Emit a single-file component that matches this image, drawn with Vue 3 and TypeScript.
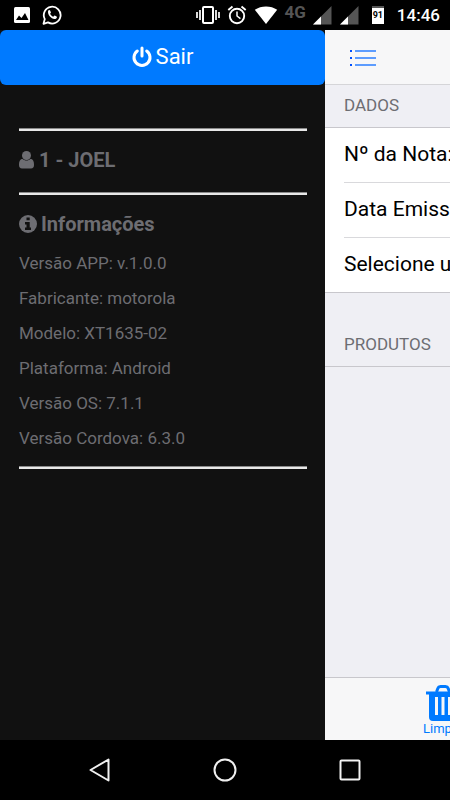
<script setup lang="ts">
interface InfoRow {
  label: string
  value: string
}

const info: InfoRow[] = [
  { label: 'Versão APP', value: 'v.1.0.0' },
  { label: 'Fabricante', value: 'motorola' },
  { label: 'Modelo', value: 'XT1635-02' },
  { label: 'Plataforma', value: 'Android' },
  { label: 'Versão OS', value: '7.1.1' },
  { label: 'Versão Cordova', value: '6.3.0' },
]

const fields: string[] = ['Nº da Nota:', 'Data Emissão:', 'Selecione um']
</script>

<template>
  <div class="screen">
    <header class="status">
      <div class="group left">
        <svg width="18" height="18" viewBox="0 0 18 18">
          <rect x="1" y="1" width="16" height="16" rx="1.500" fill="#fff" />
          <path d="M3 14l3-4.500 2.500 2.500 3.500-5 3.500 7z" fill="#000" />
        </svg>
        <svg width="20" height="20" viewBox="0 0 20 20">
          <path d="M1.500 18.800l1.300-4.700A8.400 8.400 0 1 1 6 17.400z" fill="none" stroke="#fff" stroke-width="1.800" stroke-linejoin="round" />
          <path d="M6.200 5.600c.8-1 1.600-.8 1.900-.1l.8 1.700c.2.600-.6 1.100-.8 1.600.7 1.400 1.700 2.300 3.100 2.900.5-.1 1-1.200 1.500-1.100l1.900.9c.7.400.1 1.900-.7 2.300-3.400 1.600-9-3.600-7.700-8.200z" fill="#fff" />
        </svg>
      </div>
      <div class="group right">
        <svg width="24" height="20" viewBox="0 0 24 20">
          <rect x="7" y="2" width="10" height="16" rx="1" fill="none" stroke="#fff" stroke-width="2" />
          <path d="M4 5v10M1 7v6M20 5v10M23 7v6" stroke="#fff" stroke-width="1.700" />
        </svg>
        <svg width="20" height="20" viewBox="0 0 20 20" fill="none" stroke="#fff">
          <circle cx="10" cy="11" r="7.200" stroke-width="1.900" />
          <path d="M10 6.500V11l3.400 2.600" stroke-width="1.500" />
          <path d="M1.300 5L5.500 1.500M18.700 5l-4.200-3.500" stroke-width="1.900" />
        </svg>
        <svg width="24" height="20" viewBox="0 0 24 20">
          <path d="M12 19L.8 4.800C7 .3 17 .3 23.200 4.800z" fill="#fff" />
        </svg>
        <span class="network">4G</span>
        <svg v-for="n in 2" :key="n" class="signal" width="19" height="19" viewBox="0 0 19 19">
          <path d="M0 18.500L18.500 0v18.500z" fill="#555" />
          <path d="M0 18.500L8 10.500v8z" fill="#fff" />
        </svg>
        <span class="battery">91</span>
        <time class="clock">14:46</time>
      </div>
    </header>

    <main class="main">
      <aside class="panel">
        <button class="exit" type="button">
          <svg width="20" height="22" viewBox="0 0 20 22" fill="none" stroke="#fff" stroke-width="3" stroke-linecap="round">
            <path d="M5.300 5a8 8 0 1 0 9.400 0" />
            <path d="M10 2v8" />
          </svg>
          <span>Sair</span>
        </button>
        <div class="panel-body">
          <hr class="rule" />
          <h2 class="heading user">
            <svg width="16" height="20" viewBox="0 0 16 20" fill="#6d6d72">
              <circle cx="7.500" cy="5.500" r="4.500" />
              <path d="M3.200 8.800c2.600 2.400 6 2.400 8.600 0 2.500.5 3.300 3.500 3.200 6.200 0 2-1 3.500-3 3.500H3c-2 0-3-1.500-3-3.500-.1-2.700.7-5.700 3.200-6.200z" />
            </svg>
            <span>1 - JOEL</span>
          </h2>
          <hr class="rule" />
          <h2 class="heading about">
            <svg width="18" height="20" viewBox="0 0 18 20">
              <circle cx="9" cy="10" r="9" fill="#6d6d72" />
              <path d="M7.500 3.500h3.200v2.800H7.500zM6 8h4.700v5.500H12V16H6v-2.500h1.500v-3H6z" fill="#111" />
            </svg>
            <span>Informações</span>
          </h2>
          <ul class="info">
            <li v-for="row in info" :key="row.label">{{ row.label }}: {{ row.value }}</li>
          </ul>
          <hr class="rule" />
        </div>
      </aside>

      <section class="page">
        <div class="navbar">
          <button class="menu" type="button" aria-label="Menu">
            <svg width="28" height="18" viewBox="0 0 28 18">
              <path d="M1 2h2M1 9h2M1 16h2" stroke="#0050ff" stroke-width="2" />
              <path d="M6 2h21M6 9h21M6 16h21" stroke="#2b7fff" stroke-width="1.700" />
            </svg>
          </button>
        </div>
        <h3 class="title">DADOS</h3>
        <ul class="fields">
          <li v-for="field in fields" :key="field">{{ field }}</li>
        </ul>
        <h3 class="title products">PRODUTOS</h3>
        <div class="toolbar">
          <button class="clear" type="button">
            <svg width="34" height="37" viewBox="0 0 34 37">
              <path d="M10.500 8L12 4q.5-1.500 2.500-1.500h5q2 0 2.500 1.500l1.500 4" fill="none" stroke="#007aff" stroke-width="3" />
              <path d="M0 7.500h34v3h-3V33q0 4-4 4H7q-4 0-4-4V10.500H0z" fill="#007aff" />
              <path d="M10.500 13v18M17 13v18M23.500 13v18" stroke="#f7f7f8" stroke-width="3" />
            </svg>
            <span>Limpar</span>
          </button>
        </div>
      </section>
    </main>

    <nav class="keys">
      <button type="button" aria-label="Voltar">
        <svg width="26" height="26" viewBox="0 0 26 26"><path d="M21.500 2.500v21L3.500 13z" /></svg>
      </button>
      <button type="button" aria-label="Início">
        <svg width="26" height="26" viewBox="0 0 26 26"><circle cx="13" cy="13" r="10.500" /></svg>
      </button>
      <button type="button" aria-label="Recentes">
        <svg width="26" height="26" viewBox="0 0 26 26"><rect x="3.500" y="3.500" width="19" height="19" rx="1" /></svg>
      </button>
    </nav>
  </div>
</template>

<style>
body {
  margin: 0;
  background: #000;
}
</style>

<style scoped>
.screen {
  display: flex;
  flex-direction: column;
  min-height: 100vh;
  background: #000;
  font-family: Roboto, "Liberation Sans", sans-serif;
}
button {
  border: 0;
  padding: 0;
  background: none;
  font-family: inherit;
  cursor: pointer;
}
svg {
  display: block;
  flex: none;
}
ul {
  list-style: none;
  margin: 0;
  padding: 0;
}
.status {
  display: flex;
  justify-content: space-between;
  align-items: center;
  height: 30px;
  padding: 0 10px 0 13px;
  color: #fff;
}
.group {
  display: flex;
  align-items: center;
}
.left {
  gap: 11px;
}
.right {
  gap: 7px;
}
.network {
  align-self: flex-start;
  color: #555;
  font-size: 17px;
  line-height: 18px;
  font-weight: 700;
}
.signal {
  margin-right: 1px;
}
.battery {
  box-sizing: border-box;
  width: 12px;
  height: 18px;
  margin: 0 6px 0 5px;
  border-top: 2px solid #555;
  background: #fff;
  color: #000;
  font-size: 9px;
  line-height: 14px;
  font-weight: 700;
  text-align: center;
}
.clock {
  font-size: 17px;
  line-height: 24px;
  font-weight: 500;
}
.main {
  flex: 1;
  display: grid;
  grid-template-columns: minmax(0, 13fr) minmax(0, 5fr);
}
.panel {
  background: #111;
  color: #6d6d72;
}
.exit {
  display: flex;
  justify-content: center;
  align-items: center;
  gap: 4px;
  width: 100%;
  height: 55px;
  padding-bottom: 2px;
  border-radius: 6px;
  background: #007aff;
  color: #fff;
  font-size: 22px;
}
.panel-body {
  padding: 43px 18px 0 19px;
}
.rule {
  height: 2px;
  margin: 0;
  border: 0;
  border-top: 1px solid #8a8a8a;
  background: #e8e8e8;
}
.heading {
  display: flex;
  align-items: center;
  gap: 4px;
  margin: 0;
  font-size: 20px;
  line-height: 24px;
  font-weight: 700;
}
.user {
  padding: 17px 0 20px;
}
.about {
  padding: 17px 0 10px;
}
.info {
  padding-bottom: 10px;
  font-size: 17px;
  line-height: 35px;
}
.page {
  display: flex;
  flex-direction: column;
  overflow: hidden;
  background: #efeff4;
  white-space: nowrap;
}
.navbar {
  box-sizing: border-box;
  display: flex;
  align-items: center;
  height: 55px;
  padding: 2px 0 0 24px;
  border-bottom: 1px solid #d5d5d8;
  background: #f7f7f8;
}
.title {
  margin: 0;
  padding: 0 0 2px 19px;
  border-bottom: 1px solid #c8c7cc;
  color: #6d6d72;
  font-size: 17px;
  line-height: 40px;
  font-weight: 400;
}
.products {
  padding-top: 31px;
}
.fields {
  border-bottom: 1px solid #c8c7cc;
  background: #fff;
  padding-left: 19px;
  font-size: 21px;
  line-height: 52px;
}
.fields li {
  padding-bottom: 2px;
}
.fields li + li {
  border-top: 1px solid #d9d9dc;
}
.toolbar {
  box-sizing: border-box;
  display: flex;
  align-items: center;
  height: 63px;
  margin-top: auto;
  padding: 2px 0 0 98px;
  border-top: 1px solid #c8c7cc;
  background: #f7f7f8;
}
.clear {
  display: flex;
  flex-direction: column;
  align-items: center;
  flex: none;
  color: #007aff;
  font-size: 13px;
  line-height: 16px;
}
.keys {
  display: flex;
  justify-content: space-between;
  align-items: center;
  height: 60px;
  padding: 0 87px;
}
.keys svg {
  fill: none;
  stroke: #f0f0f0;
  stroke-width: 2;
  stroke-linejoin: round;
}
</style>
